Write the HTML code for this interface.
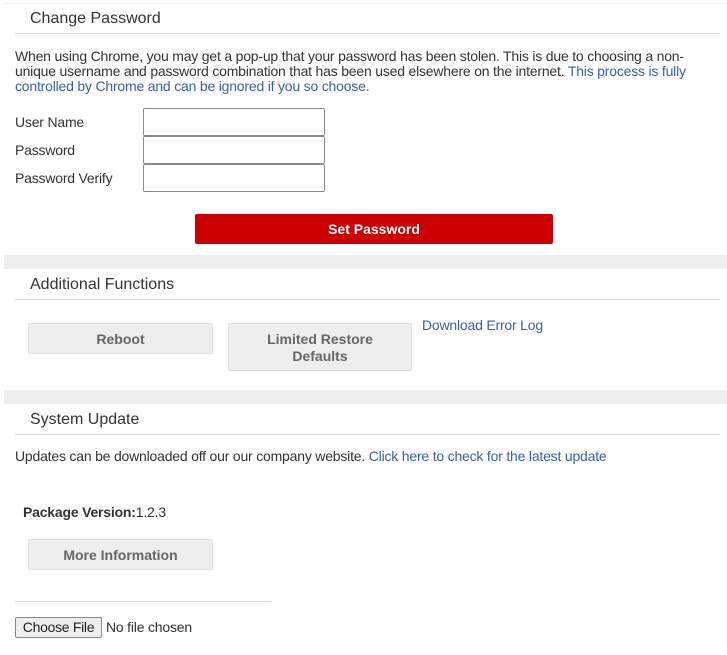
<!DOCTYPE html>
<html><head><style>
body{margin:0;width:727px;height:655px;background:#fff;font-family:"Liberation Sans",Arial,sans-serif;color:#333;position:relative;overflow:hidden}
.a{position:absolute}
h2{position:absolute;margin:0;font-weight:normal;font-size:16px;color:#333;left:30px}
.hr{position:absolute;height:1px;background:#d8d8d8}
.band{position:absolute;left:4px;right:0;height:14px;background:#eeeeee}
.t{font-size:14px;line-height:15px;letter-spacing:-0.2px}
.lnk{color:#3a5fa8}
.inp{position:absolute;left:143px;width:182px;height:28px;border:1px solid #8a8a8a;border-radius:2px;box-sizing:border-box}
.btn{position:absolute;background:#eeeeee;border:1px solid #ddd;box-sizing:border-box;color:#666;font-weight:bold;font-size:14px;text-align:center;border-radius:2px}
</style></head><body>
<div class="hr" style="left:4px;right:0;top:3px;background:#eee"></div>
<h2 style="top:10px">Change Password</h2>
<div class="hr" style="left:15px;width:705px;top:33px"></div>
<div class="a t" style="left:15px;top:49px;width:700px">When using Chrome, you may get a pop-up that your password has been stolen. This is due to choosing a non-unique username and password combination that has been used elsewhere on the internet. <span class="lnk">This process is fully controlled by Chrome and can be ignored if you so choose.</span></div>
<div class="a t" style="left:15px;top:115px">User Name</div>
<div class="a t" style="left:15px;top:143px">Password</div>
<div class="a t" style="left:15px;top:171px">Password Verify</div>
<div class="inp" style="top:108px"></div>
<div class="inp" style="top:136px"></div>
<div class="inp" style="top:164px"></div>
<div class="a" style="left:195px;top:214px;width:358px;height:30px;background:#cc0000;border-radius:2px;color:#fff;font-weight:bold;font-size:14px;text-align:center;line-height:30px">Set Password</div>
<div class="band" style="top:255px"></div>
<h2 style="top:276px">Additional Functions</h2>
<div class="hr" style="left:15px;width:705px;top:299px"></div>
<div class="btn" style="left:28px;top:323px;width:185px;height:31px;line-height:31px">Reboot</div>
<div class="btn" style="left:228px;top:323px;width:184px;height:48px;padding-top:7px;line-height:17px">Limited Restore<br>Defaults</div>
<div class="a t lnk" style="left:422px;top:318px">Download Error Log</div>
<div class="band" style="top:390px"></div>
<h2 style="top:411px">System Update</h2>
<div class="hr" style="left:15px;width:705px;top:434px"></div>
<div class="a t" style="left:15px;top:449px">Updates can be downloaded off our our company website. <span class="lnk">Click here to check for the latest update</span></div>
<div class="a t" style="left:23px;top:505px"><b>Package Version:</b>1.2.3</div>
<div class="btn" style="left:28px;top:539px;width:185px;height:31px;line-height:31px">More Information</div>
<div class="hr" style="left:15px;width:256px;top:601px"></div>
<div class="a" style="left:15px;top:617px;width:87px;height:21px;box-sizing:border-box;border:1px solid #888;background:#eee;border-radius:2px;font-size:14px;letter-spacing:-0.3px;line-height:19px;text-align:center;color:#222">Choose File</div>
<div class="a t" style="left:106px;top:620px;color:#333">No file chosen</div>
</body></html>
